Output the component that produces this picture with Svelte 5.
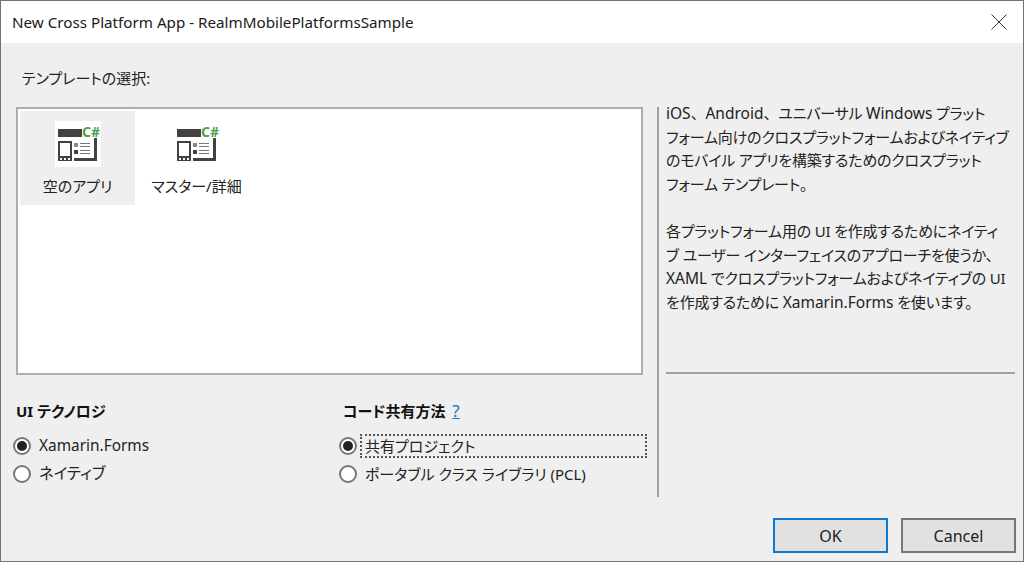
<script lang="ts">
  const templates = [
    { label: "空のアプリ", selected: true },
    { label: "マスター/詳細", selected: false },
  ];
  const techOptions = [
    { label: "Xamarin.Forms", checked: true },
    { label: "ネイティブ", checked: false },
  ];
  const shareOptions = [
    { label: "共有プロジェクト", checked: true, focused: true },
    { label: "ポータブル クラス ライブラリ (PCL)", checked: false, focused: false },
  ];
</script>

{#snippet templateIcon()}
  <svg class="tpl-icon" width="46" height="46" viewBox="0 0 46 46">
    <rect x="3" y="8" width="24" height="8" fill="#424242" />
    <text x="27" y="16" class="csharp">C#</text>
    <path d="M39 17h3v23H19v-3h20z" fill="#424242" />
    <rect x="3" y="20" width="14" height="20" fill="#424242" />
    <rect x="5" y="22" width="10" height="13" fill="#fff" />
    <rect x="5" y="37" width="2" height="2" fill="#fff" />
    <rect x="9" y="37" width="2" height="2" fill="#fff" />
    <rect x="13" y="37" width="2" height="2" fill="#fff" />
    <rect x="19" y="22" width="4" height="4" fill="#8a8a8a" />
    <rect x="19" y="29" width="4" height="4" fill="#424242" />
    <path d="M25 22h10v1H25zM25 25h10v1H25zM25 29h10v1H25zM25 32h10v1H25z" fill="#777" />
  </svg>
{/snippet}

{#snippet radio(opt)}
  <label class="radio-row">
    <span class="radio" class:on={opt.checked}></span>
    <span class="radio-label" class:focused={opt.focused}>{opt.label}</span>
  </label>
{/snippet}

<div class="window">
  <header class="titlebar">
    <span class="title">New Cross Platform App - RealmMobilePlatformsSample</span>
    <svg class="close" width="16" height="16" viewBox="0 0 16 16">
      <path d="M.5.5l15 15M15.5.5l-15 15" stroke="#333" stroke-width="1" fill="none" />
    </svg>
  </header>

  <main class="body">
    <div class="content">
      <section class="left">
        <div class="pick-label">テンプレートの選択:</div>
        <div class="listbox">
          {#each templates as t}
            <div class="tile" class:selected={t.selected}>
              <span class="tile-icon">{@render templateIcon()}</span>
              <span class="tile-label">{t.label}</span>
            </div>
          {/each}
        </div>
        <div class="options">
          <div class="group tech">
            <h3>UI テクノロジ</h3>
            {#each techOptions as opt}
              {@render radio(opt)}
            {/each}
          </div>
          <div class="group share">
            <h3>コード共有方法 <a href="#help">?</a></h3>
            {#each shareOptions as opt}
              {@render radio(opt)}
            {/each}
          </div>
        </div>
      </section>

      <aside class="right">
        <div class="desc">
          <p><span class="lat">iOS</span><span class="full">、</span><span class="lat">Android</span><span class="full">、</span>ユニバーサル <span class="lat">Windows</span> プラット<br />フォーム向けのクロスプラットフォームおよびネイティブ<br />のモバイル アプリを構築するためのクロスプラット<br />フォーム テンプレート。</p>
          <p>各プラットフォーム用の UI を作成するためにネイティ<br />ブ ユーザー インターフェイスのアプローチを使うか、<br /><span class="lat">XAML</span> でクロスプラットフォームおよびネイティブの UI<br />を作成するために <span class="lat">Xamarin.Forms</span> を使います。</p>
        </div>
      </aside>
    </div>

    <footer class="buttons">
      <button class="primary">OK</button>
      <button>Cancel</button>
    </footer>
  </main>
</div>

<style>
  :global(body) {
    margin: 0;
  }

  .window {
    box-sizing: border-box;
    width: 1024px;
    height: 562px;
    border: 1px solid #69747f;
    display: flex;
    flex-direction: column;
    background: #efefef;
    color: #222;
    font-family: "Noto Sans", "Noto Sans CJK JP", sans-serif;
    font-size: 15px;
    font-feature-settings: "palt";
  }

  .titlebar {
    height: 42px;
    flex: none;
    background: #fff;
    display: flex;
    align-items: center;
    justify-content: space-between;
    padding: 0 16px 0 11px;
  }

  .title {
    font-size: 15.2px;
    color: #1a1a1a;
  }

  .body {
    flex: 1;
    display: flex;
    flex-direction: column;
    min-height: 0;
  }

  .content {
    display: flex;
    padding: 26px 8px 0 15px;
    height: 429px;
    box-sizing: border-box;
  }

  .left {
    width: 627px;
    flex: none;
    display: flex;
    flex-direction: column;
  }

  .pick-label {
    flex: none;
    height: 39px;
    padding-left: 6px;
    line-height: 20px;
    margin-top: -1px;
  }

  .listbox {
    flex: none;
    box-sizing: border-box;
    height: 268px;
    border: 2px solid #adadad;
    background: #fff;
    padding: 2px;
    display: flex;
    align-items: flex-start;
    gap: 4px;
  }

  .tile {
    width: 115px;
    height: 94px;
    display: flex;
    flex-direction: column;
    align-items: center;
  }

  .tile.selected {
    background: #efefef;
  }

  .tile-icon {
    display: block;
    margin-top: 10px;
    line-height: 0;
  }

  .tile.selected .tpl-icon {
    background: #fff;
  }

  .tile-label {
    margin-top: 9px;
    line-height: 20px;
    font-size: 15px;
  }

  .csharp {
    font-family: "Noto Sans", sans-serif;
    font-size: 14px;
    font-weight: 700;
    fill: #4da14d;
  }

  .options {
    display: flex;
    padding-top: 26px;
  }

  .group h3 {
    margin: 0 0 11px;
    font-size: 15px;
    font-weight: 700;
    line-height: 20px;
    color: #111;
  }

  .group a {
    margin-left: 3px;
    font-size: 17px;
    font-weight: 400;
    color: #1a6fc4;
  }

  .tech {
    width: 327px;
    box-sizing: border-box;
  }

  .share {
    flex: 1;
  }

  .radio-row {
    display: flex;
    align-items: center;
    height: 28px;
    margin-left: -3px;
  }

  .radio {
    box-sizing: border-box;
    width: 18px;
    height: 18px;
    border-radius: 50%;
    border: 2px solid #777;
    background: #fff;
    flex: none;
    margin-right: 7px;
    display: flex;
    align-items: center;
    justify-content: center;
  }

  .radio.on::after {
    content: "";
    width: 10px;
    height: 10px;
    border-radius: 50%;
    background: #222;
  }

  .radio-label {
    flex: 1;
    line-height: 20px;
    border: 1px solid transparent;
  }

  .share .radio {
    margin-left: -1px;
  }

  .radio-label.focused {
    border: 2px dotted #555;
    margin-left: -4px;
    padding-left: 3px;
    margin-right: -4px;
  }

  .tech .radio-label {
    font-size: 15.4px;
  }

  .right {
    flex: 1;
    margin-left: 14px;
    border-left: 2px solid #a0a0a0;
    height: 390px;
    margin-top: 38px;
    padding-left: 7px;
  }

  .desc {
    height: 270px;
    border-bottom: 2px solid #a0a0a0;
    margin-top: -5px;
  }

  .desc p {
    margin: 0 0 24px;
    line-height: 23.5px;
    font-size: 15px;
    letter-spacing: -0.2px;
    white-space: nowrap;
  }

  .lat {
    font-size: 15.5px;
    letter-spacing: 0;
  }

  .full {
    font-feature-settings: normal;
  }

  .buttons {
    display: flex;
    justify-content: flex-end;
    gap: 13px;
    padding: 46px 7px 0 0;
  }

  button {
    width: 115px;
    height: 35px;
    box-sizing: border-box;
    border: 2px solid #777;
    background: #e1e1e1;
    font: inherit;
    font-size: 16px;
    color: #222;
    padding: 1px 0 0;
  }

  button.primary {
    border-color: #0a78d7;
  }
</style>
